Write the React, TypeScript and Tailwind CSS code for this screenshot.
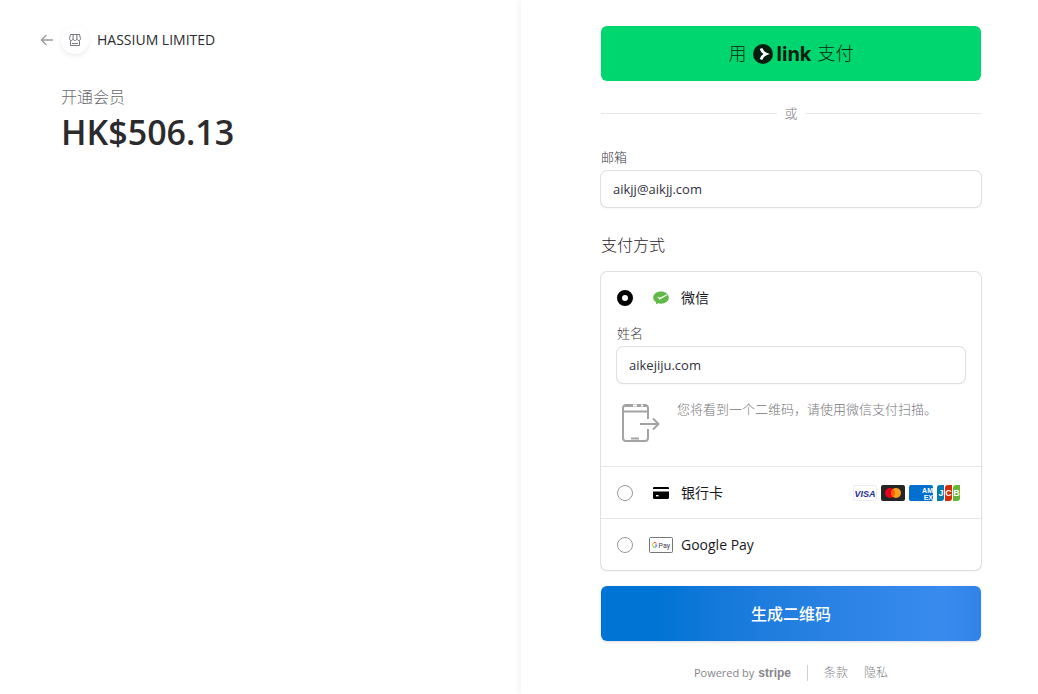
import { ReactNode, useState } from "react";

type Method = "wechat" | "card" | "gpay"

export default function App() {
    return <div className="grid min-h-screen grid-cols-[calc(50%+2px)_1fr] bg-white text-[13px] leading-5 text-[#30313d]
            font-['Open_Sans','Noto_Sans_CJK_SC',sans-serif]">
        <Summary />
        <Checkout />
    </div>
}

function Summary() {
    return <section className="px-10 pt-[26px]">
        <header className="flex items-center">
            <a href="#back" aria-label="返回" className="text-[#9a9a9f]">
                <BackIcon />
            </a>
            <span className="ml-[7px] mr-2 flex size-7 items-center justify-center rounded-full text-[#77777c]
                shadow-[0_2px_5px_rgba(0,0,0,0.08)]">
                <StoreIcon />
            </span>
            <span className="text-sm font-medium text-[#2b2b30]">HASSIUM LIMITED</span>
        </header>
        <div className="mt-[31px] pl-[21px]">
            <h1 className="text-base leading-6 font-light text-[#6b6b70]">开通会员</h1>
            <p className="text-[34px] leading-[46px] font-semibold text-[#2b2b2e]">HK$506.13</p>
        </div>
    </section>
}

function Checkout() {
    const [method, setMethod] = useState<Method>("wechat")
    const [email, setEmail] = useState("aikjj@aikjj.com")
    const [name, setName] = useState("aikejiju.com")

    return <main className="pl-20 pr-[57px] pt-[26px] shadow-[-3px_0_4px_rgba(0,0,0,0.04)]">
        <form onSubmit={e => e.preventDefault()}>
            <button type="button" className="flex h-[55px] w-full items-center justify-center gap-1.5 rounded-md bg-[#00d66f]
                pb-0.5 text-lg font-light text-[#06290f]">
                <span>用</span>
                <LinkLogo />
                <span>支付</span>
            </button>

            <div className="mt-[22px] flex items-center gap-2 text-[#7a7a7f]">
                <span className="h-px flex-1 bg-[#e6e6e6]" />
                <span className="font-light">或</span>
                <span className="h-px flex-1 bg-[#e6e6e6]" />
            </div>

            <div className="mt-6">
                <Field id="email" type="email" label="邮箱" value={email} onChange={setEmail} />
            </div>

            <h2 className="mt-[26px] text-base leading-6 font-light text-[#1f2026]">支付方式</h2>

            <div className="mt-[15px] rounded-md shadow-[0_1px_2px_rgba(0,0,0,0.12)] ring-1 ring-[#e0e0e0]">
                <MethodRow id="wechat" label="微信" icon={<WeChatIcon />} method={method} setMethod={setMethod} />
                {method === "wechat" && <div className="px-4 pb-[22px]">
                    <Field id="name" type="text" label="姓名" value={name} onChange={setName} />
                    <div className="mt-4 flex gap-4">
                        <PhoneIcon />
                        <p className="font-light text-[#77777c]">您将看到一个二维码，请使用微信支付扫描。</p>
                    </div>
                </div>}
                <div className="border-t border-[#e6e6e6]">
                    <MethodRow id="card" label="银行卡" icon={<CardIcon />} method={method} setMethod={setMethod}>
                        <CardBrands />
                    </MethodRow>
                </div>
                <div className="border-t border-[#e6e6e6]">
                    <MethodRow id="gpay" label="Google Pay" icon={<GPayIcon />} method={method} setMethod={setMethod} />
                </div>
            </div>

            <button type="submit" className="mt-4 h-[55px] w-full rounded-md text-base font-medium text-white
                bg-linear-to-r from-[#0074d4] from-15% via-[#398bee] via-90% to-[#3183e8]
                shadow-[0_1px_3px_rgba(0,0,0,0.15)]">
                生成二维码
            </button>
        </form>
        <Footer />
    </main>
}

interface FieldProps {
    id: string
    type: string
    label: string
    value: string
    onChange: (value: string) => void
}

function Field({ id, type, label, value, onChange }: FieldProps) {
    return <div className="flex flex-col gap-1">
        <label htmlFor={id} className="font-light text-[#40414a]">{label}</label>
        <input id={id} type={type} value={value} onChange={e => onChange(e.target.value)}
            className="h-9 w-full rounded-md px-3 shadow-[0_1px_2px_rgba(0,0,0,0.10)] ring-1 ring-[#e0e0e0] outline-none" />
    </div>
}

interface MethodRowProps {
    id: Method
    label: string
    icon: ReactNode
    method: Method
    setMethod: (method: Method) => void
    children?: ReactNode
}

function MethodRow({ id, label, icon, method, setMethod, children }: MethodRowProps) {
    return <label className="flex h-[51px] items-center px-4">
        <input type="radio" name="method" checked={method === id} onChange={() => setMethod(id)}
            className="size-4 appearance-none rounded-full border border-[#999] bg-white checked:border-[5px] checked:border-black" />
        <span className="ml-4 mr-2 flex w-6 justify-center">{icon}</span>
        <span className="text-sm text-[#1a1a1e]">{label}</span>
        {children}
    </label>
}

function Footer() {
    return <footer className="mt-[22px] flex items-center justify-center text-xs leading-5 text-[#85858a]">
        <span className="mr-1 text-[11px]">Powered by</span>
        <span className="font-bold font-['Liberation_Sans',sans-serif]">stripe</span>
        <span className="mx-4 h-4 w-px bg-[#d0d0d0]" />
        <a href="#terms" className="mr-4 font-light">条款</a>
        <a href="#privacy" className="font-light">隐私</a>
    </footer>
}

function BackIcon() {
    return <svg width="14" height="12" viewBox="0 0 14 12" fill="none" stroke="currentColor" strokeWidth="1.3">
        <path d="M6 1.500 1.400 6 6 10.500M1.400 6H12.500" strokeLinecap="round" strokeLinejoin="round" />
    </svg>
}

function StoreIcon() {
    return <svg width="12" height="12" viewBox="0 0 12 12" fill="none" stroke="currentColor">
        <path d="M1.500.5h9l1 4.200c0 1-.7 1.800-1.700 1.800S7.900 5.700 7.900 4.700c0 1-.8 1.800-1.900 1.800S4.100 5.700 4.100 4.700c0 1-.9 1.800-1.900 1.800S.5 5.700.5 4.700zM4.100 4.700V.5M7.900 4.700V.5M1.500 6.500v5h9v-5M3 9.500h6" />
    </svg>
}

function LinkLogo() {
    return <span className="flex items-center gap-1 text-[#011e0f]">
        <svg width="20" height="20" viewBox="0 0 20 20" className="mt-0.5">
            <circle cx="10" cy="10" r="10" fill="#011e0f" />
            <path d="M8 4.500C8.800 7 10.500 9 13 10c-2.500 1-4.200 3-5 5.500" fill="none" stroke="#fff" strokeWidth="2.800" />
        </svg>
        <span className="mt-0.5 text-xl font-bold font-['Inter',sans-serif]">link</span>
    </span>
}

function WeChatIcon() {
    return <svg width="16" height="14" viewBox="0 0 16 14">
        <path d="M8 .5c4.400 0 7.800 2.700 7.800 6.100S12.400 12.700 8 12.700c-1 0-2-.1-2.800-.4L2.700 13.600l.5-2.300C1.300 10.200.2 8.500.2 6.600.2 3.200 3.600.5 8 .5z" fill="#5fb948" />
        <path d="M4.200 5.600 6.400 8.800 14.600 3.900 13.800 3.200 6.700 6.700z" fill="#fff" />
    </svg>
}

function PhoneIcon() {
    return <svg width="44" height="45" viewBox="0 0 44 45" fill="none" stroke="#a3a3a3" strokeWidth="2" className="shrink-0">
        <path d="M31 20V9.500C31 7 30 6 28 6H9C7 6 6 7 6 9.500v29C6 41 7 42 9 42h19c2 0 3-1 3-3.500V30" />
        <path d="M6 12.500h25M14 39.500h8" />
        <path d="M8 6.500h21" strokeWidth="3" />
        <path d="M16 6.500h4M24 6.500h2" stroke="#fff" />
        <path d="M23 25h18M36 19.500l5.500 5.500-5.500 5.500" />
    </svg>
}

function CardIcon() {
    return <svg width="16" height="12" viewBox="0 0 16 12">
        <path d="M0 1.200C0 .5.500 0 1.200 0h13.600c.7 0 1.200.5 1.200 1.200V2H0zM0 4.500h16v6.300c0 .7-.5 1.200-1.200 1.200H1.200C.5 12 0 11.500 0 10.800z" fill="#000" />
        <path d="M3 8h2.500v1.400H3z" fill="#fff" />
    </svg>
}

function GPayIcon() {
    return <svg width="24" height="16" viewBox="0 0 24 16" className="font-['Roboto',sans-serif]">
        <rect x=".5" y=".5" width="23" height="15" rx="1" fill="#fff" stroke="#777" />
        <path d="M7.500 6.300A2.300 2.300 0 0 0 4.200 6.200" fill="none" stroke="#ea4335" />
        <path d="M4.200 6.200a2.500 2.500 0 0 0 0 3.500" fill="none" stroke="#fbbc04" />
        <path d="M4.200 9.700a2.300 2.300 0 0 0 3 0" fill="none" stroke="#34a853" />
        <path d="M7.200 9.700c.5-.4.800-1 .8-1.700H6" fill="none" stroke="#4285f4" />
        <text x="9.500" y="10.500" fontSize="7" fill="#3c4043">Pay</text>
    </svg>
}

function CardBrands() {
    return <span className="ml-auto mr-1 flex gap-1 font-['Liberation_Sans',sans-serif]">
        <svg width="24" height="16" viewBox="0 0 24 16">
            <rect x=".5" y=".5" width="23" height="15" rx="2" fill="#fff" stroke="#ececf2" />
            <text x="12" y="11.500" textAnchor="middle" fontSize="9" fontWeight="700" fontStyle="italic" fill="#1a2f9c">VISA</text>
        </svg>
        <svg width="24" height="16" viewBox="0 0 24 16">
            <rect width="24" height="16" rx="2" fill="#252525" />
            <circle cx="9" cy="8" r="5" fill="#eb001b" />
            <circle cx="15" cy="8" r="5" fill="#f79e1b" />
            <path d="M12 4a5 5 0 0 1 0 8 5 5 0 0 1 0-8z" fill="#ff5f00" />
        </svg>
        <svg width="24" height="16" viewBox="0 0 24 16">
            <rect width="24" height="16" rx="2" fill="#016fd0" />
            <text x="24" y="7.500" textAnchor="end" fontSize="7" fontWeight="700" fill="#fff">AM</text>
            <text x="24" y="14.500" textAnchor="end" fontSize="7" fontWeight="700" fill="#fff">EX</text>
        </svg>
        <svg width="24" height="16" viewBox="0 0 24 16">
            <path d="M3 0h4v13a3 3 0 0 1-3 3H0V3a3 3 0 0 1 3-3z" fill="#047ab1" />
            <path d="M11 0h4v13a3 3 0 0 1-3 3H8V3a3 3 0 0 1 3-3z" fill="#d42d06" />
            <path d="M19 0h4v13a3 3 0 0 1-3 3h-4V3a3 3 0 0 1 3-3z" fill="#67b637" />
            <g fill="#fff" fontSize="9" fontWeight="700" textAnchor="middle">
                <text x="4" y="11">J</text>
                <text x="11.500" y="11">C</text>
                <text x="19.500" y="11">B</text>
            </g>
        </svg>
    </span>
}
